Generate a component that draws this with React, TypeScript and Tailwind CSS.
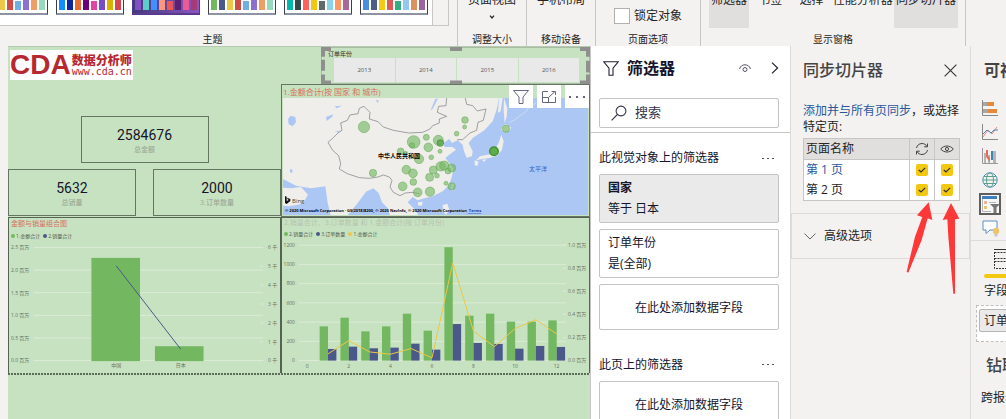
import React from "react";

const themes = [
  {
    dark: false,
    colors: ["#73b761", "#4a588a", "#ecc846", "#cd4c46", "#71afe2", "#8d6fd1", "#ee9e64", "#95dabb"],
  },
  {
    dark: false,
    colors: ["#118dff", "#12239e", "#e66c37", "#6b007b", "#e044a7", "#744ec2", "#d9b300", "#d64550"],
  },
  {
    dark: true,
    colors: ["#8250c4", "#5ecbc8", "#438fff", "#ff977e", "#eb5757", "#5b2071", "#ec5a96", "#a43b76"],
  },
  {
    dark: false,
    colors: ["#73b761", "#4a588a", "#ecc846", "#cd4c46", "#71afe2", "#8d6fd1", "#ee9e64", "#95dabb"],
  },
  {
    dark: false,
    colors: ["#01b8aa", "#374649", "#fd625e", "#f2c80f", "#5f6b6d", "#8ad4eb", "#fe9666", "#a66999"],
  },
  {
    dark: false,
    colors: ["#4a8ddc", "#4c5d8a", "#f3c911", "#dc5b57", "#33ae81", "#95c8f0", "#dd915f", "#9a64a0"],
  },
];

const years = ["2013", "2014", "2015", "2016"];

const months = [
  { month: 1, sales: 356, orders: 121, amount: 0.058 },
  { month: 2, sales: 446, orders: 145, amount: 0.173 },
  { month: 3, sales: 304, orders: 128, amount: 0.075 },
  { month: 4, sales: 356, orders: 135, amount: 0.055 },
  { month: 5, sales: 488, orders: 176, amount: 0.104 },
  { month: 6, sales: 311, orders: 114, amount: 0.023 },
  { month: 7, sales: 1179, orders: 380, amount: 0.844 },
  { month: 8, sales: 467, orders: 183, amount: 0.254 },
  { month: 9, sales: 488, orders: 173, amount: 0.121 },
  { month: 10, sales: 405, orders: 124, amount: 0.277 },
  { month: 11, sales: 405, orders: 152, amount: 0.354 },
  { month: 12, sales: 418, orders: 142, amount: 0.23 },
];

// x, y, radius of every city bubble
const cities = [
  [264, 252, 17], [413, 297, 19], [408, 307, 8], [374, 325, 10], [389, 331, 6],
  [451, 283, 9], [457, 313, 13], [487, 292, 15], [492, 325, 6], [466, 343, 7],
  [429, 348, 14], [567, 231, 10], [566, 252, 6], [542, 272, 7], [690, 257, 11],
  [291, 390, 11], [391, 380, 13], [411, 391, 13], [412, 417, 10], [380, 430, 13],
  [425, 448, 13], [462, 446, 14], [461, 403, 12], [472, 381, 12], [483, 398, 7],
  [494, 370, 14], [505, 368, 14], [516, 384, 9], [527, 375, 12], [510, 421, 6],
  [527, 430, 11],
];

const Divider = () => <div className="w-px bg-[#c8c6c4]" />;

const RibbonGroup = ({
  label,
  className,
  children,
}: {
  label: string;
  className: string;
  children?: React.ReactNode;
}) => (
  <div className={`flex shrink-0 flex-col items-center justify-between ${className}`}>
    <div className="flex w-full justify-center">{children}</div>
    <span className="text-[10px] leading-[14px]">{label}</span>
  </div>
);

const ThemeThumb = ({ colors, dark }: { colors: string[]; dark: boolean }) => (
  <button
    aria-label="theme"
    className={`flex h-[15px] w-[68px] shrink-0 gap-[2px] border-x border-b-2 px-[2px] pb-[3px] ${
      dark
        ? "border-[#4a3b8c] border-b-[#5b3a8e] bg-linear-to-r from-[#3f3a7c] to-[#8d55c0]"
        : "border-[#3b3f4c] border-b-[#8d93a3] bg-white"
    }`}
  >
    {colors.map((color, i) => (
      <span
        key={color}
        className={i === 4 ? "mt-px h-[9px] w-[6px]" : "h-[10px] w-[6px]"}
        style={{ backgroundColor: color }}
      />
    ))}
  </button>
);

const Ribbon = () => (
  <header className="flex h-[46px] shrink-0 overflow-hidden bg-[#f3f2f1] text-[#252423]">
    <div className="flex w-[457px] shrink-0 flex-col justify-between">
      <div className="flex h-[26px] w-[449px] border-r border-b border-[#c8c6c4] bg-white">
        <div className="flex flex-1 justify-end gap-2 overflow-hidden pr-1">
          {themes.map((theme, i) => (
            <ThemeThumb key={i} {...theme} />
          ))}
        </div>
        <div className="w-4 border-l border-[#c8c6c4] bg-[#f3f2f1]" />
      </div>
      <span className="pr-8 text-center text-[10px] leading-[14px]">主题</span>
    </div>
    <Divider />
    <RibbonGroup label="调整大小" className="w-[68px]">
      <button className="flex flex-col items-center text-[12px] leading-3">
        <span className="-mt-[6px]">页面视图</span>
        <svg width="6" height="4" viewBox="0 0 6 4" className="mt-[9px]" fill="none" stroke="#252423" strokeWidth="1.2">
          <path d="M1 .6 3 3 5 .6" />
        </svg>
      </button>
    </RibbonGroup>
    <Divider />
    <RibbonGroup label="移动设备" className="w-[68px]">
      <button className="-mt-[6px] text-[12px] leading-3">手机布局</button>
    </RibbonGroup>
    <Divider />
    <RibbonGroup label="页面选项" className="w-[104px]">
      <label className="mt-2 flex items-center gap-1 text-[12px] leading-4">
        <input type="checkbox" className="size-4 appearance-none border border-[#b3b0ad] bg-white" />
        锁定对象
      </label>
    </RibbonGroup>
    <Divider />
    <RibbonGroup label="显示窗格" className="w-[264px]">
      <div className="flex h-7 w-full justify-between pr-[7px] pl-2 text-[12px] leading-3">
        <button className="flex w-10 justify-center bg-[#e1dfdd]">
          <span className="-mt-[6px]">筛选器</span>
        </button>
        <button className="flex">
          <span className="-mt-[6px]">书签</span>
        </button>
        <button className="ml-2 flex">
          <span className="-mt-[6px]">选择</span>
        </button>
        <button className="flex">
          <span className="-mt-[6px]">性能分析器</span>
        </button>
        <button className="-ml-2 flex w-16 justify-center bg-[#e1dfdd]">
          <span className="-mt-[6px]">同步切片器</span>
        </button>
      </div>
    </RibbonGroup>
    <Divider />
  </header>
);

const Logo = () => (
  <div className="mt-[3px] ml-[2px] flex h-[31px] w-[123px] items-center gap-px bg-white text-[#b8282f]">
    <span className="font-['Liberation_Sans'] text-[28px] leading-7 font-bold">CDA</span>
    <div className="flex flex-col pt-[2px]">
      <span className="text-[12px] leading-3 font-black">数据分析师</span>
      <span className="font-['DejaVu_Sans_Mono'] text-[10px] leading-[10px]">www.cda.cn</span>
    </div>
  </div>
);

const Kpi = ({ value, label }: { value: string; label: string }) => (
  <div className="flex h-[47px] w-32 flex-col items-center justify-center border border-[#667563] pt-1">
    <span className="font-[Roboto] text-[14px] leading-[18px] text-[#14142b]">{value}</span>
    <span className="text-[7px] leading-3 font-medium text-[#9caa97]">{label}</span>
  </div>
);

const Legend = ({ items }: { items: { label: string; dot: string }[] }) => (
  <ul className="flex gap-[3px] text-[5px] leading-2 text-[#4f5a4c]">
    {items.map((item) => (
      <li key={item.label} className="flex items-center gap-px">
        <span className={`size-1 rounded-full ${item.dot}`} />
        {item.label}
      </li>
    ))}
  </ul>
);

const ComboChart = () => (
  <section className="flex-1 border-x border-t border-[#566353] px-[2px]">
    <h3 className="text-[7px] leading-3 text-[#d8705f]">金额与销量组合图</h3>
    <div className="py-[2px]">
      <Legend
        items={[
          { label: "1.金额合计", dot: "bg-[#73b761]" },
          { label: "2.销量合计", dot: "bg-[#4a588a]" },
        ]}
      />
    </div>
    <svg viewBox="0 0 269 132" className="w-full overflow-visible text-[5px]" fill="#66705f">
      {[0, 1, 2, 3, 4, 5].map((i) => (
        <g key={i}>
          <path d={`M23 ${119.5 - i * 22.8}H254`} stroke="#dcebd7" />
          <text x="0" y={121.3 - i * 22.8}>{`${(i / 2).toFixed(1)} 百万`}</text>
        </g>
      ))}
      {[0, 1, 2, 3, 4, 5, 6].map((i) => (
        <g key={i}>
          <path d={`M251 ${119.5 - i * 19}h3`} stroke="#dcebd7" />
          <text x="259" y={121.3 - i * 19}>{`${i} 千`}</text>
        </g>
      ))}
      <rect x="81" y="16" width="49" height="104" fill="#73b761" />
      <rect x="145" y="105" width="49" height="15" fill="#73b761" />
      <path d="M106 24 171 108" stroke="#4a588a" fill="none" />
      <text x="106" y="126" textAnchor="middle">中国</text>
      <text x="171" y="126" textAnchor="middle">日本</text>
    </svg>
  </section>
);

const monthX = (month: number) => 23.3 + month * 20.86;

const MonthChart = () => (
  <section className="flex-1 border-x border-t border-[#566353] px-[2px]">
    <h3 className="text-[7px] leading-[10px] text-[#b5c2b0]">2.销量合计、3.订单数量 和 1.金额合计(按 订单月份)</h3>
    <div className="py-[2px]">
      <Legend
        items={[
          { label: "2.销量合计", dot: "bg-[#73b761]" },
          { label: "3.订单数量", dot: "bg-[#4a588a]" },
          { label: "1.金额合计", dot: "bg-[#ecc846]" },
        ]}
      />
    </div>
    <svg viewBox="0 0 304 133" className="w-full overflow-visible text-[5px]" fill="#66705f">
      {[0, 1, 2, 3, 4, 5, 6].map((i) => (
        <g key={i}>
          <path d={`M15 ${121 - i * 19.3}H283`} stroke="#dcebd7" />
          <text x="11" y={122.8 - i * 19.3} textAnchor="end">{i * 200}</text>
          <text x={23.3 + i * 41.7} y="128.5" textAnchor="middle">{i * 2}</text>
        </g>
      ))}
      {[0, 1, 2, 3, 4, 5].map((i) => (
        <g key={i}>
          <path d={`M280 ${121 - i * 23.2}h3`} stroke="#dcebd7" />
          <text x="285" y={122.8 - i * 23.2}>{`${(i / 5).toFixed(1)} 百万`}</text>
        </g>
      ))}
      {months.map(({ month, sales, orders }) => (
        <g key={month}>
          <rect
            x={monthX(month) - 8.4}
            y={121 - sales * 0.0965}
            width="8.4"
            height={sales * 0.0965}
            fill="#73b761"
          />
          <rect x={monthX(month)} y={121 - orders * 0.0965} width="8.4" height={orders * 0.0965} fill="#4a588a" />
        </g>
      ))}
      <polyline
        points={months.map(({ month, amount }) => `${monthX(month)},${121 - amount * 116}`).join(" ")}
        fill="none"
        stroke="#ecc846"
        strokeWidth="1"
      />
    </svg>
  </section>
);

const Slicer = () => (
  <fieldset aria-label="year" className="relative ml-10 h-[38px] border border-[#a9bca4] pr-[10px] pl-3">
    <div className="-ml-[6px] pt-[2px] text-[6px] leading-2 text-[#333]">订单年份</div>
    <div className="flex gap-px">
      {years.map((year) => (
        <button key={year} className="h-6 flex-1 bg-[#e9e9e9] text-[6px] text-[#555]">
          {year}
        </button>
      ))}
    </div>
    <svg
      className="pointer-events-none absolute -inset-px size-[calc(100%+2px)]"
      viewBox="0 0 269 38"
      preserveAspectRatio="none"
    >
      <g fill="none" stroke="#8f8f8f" strokeWidth="4">
        <path d="M2 10V2H10M129 2H141M259 2H267V10M267 14V26M267 28V36H259M141 36H129M10 36H2V28M2 13V24" />
      </g>
    </svg>
  </fieldset>
);

const MapVisual = () => (
  <section className="relative border border-[#667563] px-px pb-px">
    <h3 className="text-[8px] leading-[13px] text-[#d8705f]">1.金额合计(按 国家 和 城市)</h3>
    <svg viewBox="0 0 305 117" className="w-full bg-[#adc7f4]">
      <g transform="scale(.3333) translate(-21 -165)">
        <path
          d="M0 150H672L662 200 650 235 625 262 590 285 578 300 590 325 588 340 572 344 564 325 560 305 545 292 528 300 520 288 502 300 506 312 530 312 540 320 520 335 508 345 524 365 532 378 528 400 520 425 500 445 470 460 445 466 425 472 410 462 395 478 415 498 430 520H343L335 495 318 478 308 450 292 436 270 446 243 483 212 520H165L155 480 148 430 105 436 60 428 21 408Z"
          fill="#efeeea"
        />
        <path d="M21 434 45 436 75 432 96 455 80 482 40 490 21 488Z" fill="#efeeea" />
        <path d="M672 150H686L680 165 674 205 666 210 668 180Z" fill="#efeeea" />
        <path d="M684 165 694 195 692 222 686 240 683 200Z" fill="#efeeea" />
        <path d="M680 248 690 243 706 254 700 264 684 268 676 260Z" fill="#efeeea" />
        <path d="M676 275 683 295 678 320 664 338 640 345 618 348 600 352 612 340 642 334 658 318 668 300Z" fill="#efeeea" />
        <path d="M596 352 608 356 604 370 596 366Z M618 350 632 349 624 357Z" fill="#efeeea" />
        <path d="M528 420 534 424 530 445 523 436Z M426 478 440 476 438 488 426 487Z M500 486 514 482 520 500 510 516 502 505Z" fill="#efeeea" />
        <path
          d="M36 228 44 218 58 222 60 238 50 250 38 244ZM150 222 172 214 168 222 152 234ZM176 190 198 188 182 196ZM176 266 194 262 186 268ZM42 378 50 380 48 390 42 388ZM298 172 308 172 306 180ZM478 168 486 166 470 198 464 202Z"
          fill="#adc7f4"
        />
        <path
          d="M264 190 250 196 246 212 222 216 214 232 194 240 198 262 186 270 172 284 156 298 170 322 188 338 194 362 190 378 214 392 250 404 280 406 306 402 322 396 340 402 348 412 342 432 352 448 372 458 388 450 410 448 430 452M264 190 282 208 280 228 306 236 322 252 352 262 398 270 440 268 462 258 470 248 490 240 490 228 512 220 484 208 488 190 510 188 512 165M568 165 572 184 590 188 604 204 630 198 622 232 606 238 602 262 582 270 560 290 544 290"
          fill="none"
          stroke="#77777a"
          strokeWidth="2"
        />
        <path d="M700 238 718 230 726 222 750 206 756 196 780 180" fill="none" stroke="#dbe3ee" strokeWidth="2" />
        {cities.map(([cx, cy, r]) => (
          <circle
            key={`${cx}-${cy}`}
            cx={cx}
            cy={cy}
            r={r}
            fill="#73b761"
            fillOpacity=".62"
            stroke="#5da34c"
            strokeOpacity=".7"
            strokeWidth="2"
          />
        ))}
        <circle cx="493" cy="300" r="10" fill="#5aa348" fillOpacity=".8" stroke="#3f8f30" strokeWidth="2" />
        <circle cx="654" cy="325" r="13" fill="#5fac4d" stroke="#3f9030" strokeWidth="4" />
        <path d="M27 459 32 461V474L38 471 35 469 33 464 43 468V474L32 483 27 480Z" fill="#111" />
      </g>
      <text x="95" y="60" className="text-[6px] font-bold">中华人民共和国</text>
      <text x="246" y="73" className="text-[6px]" fill="#2f5fc0">太平洋</text>
      <text x="9" y="105" className="text-[6px]" fill="#444">Bing</text>
      <text x="2" y="114" className="text-[4px] font-bold">
        © 2020 Microsoft Corporation · GS(2018)8200, © 2020 NavInfo, © 2020 Microsoft Corporation
        <tspan dx="1" textDecoration="underline" fill="#1a3f9a"> Terms</tspan>
      </text>
    </svg>
    <div className="absolute top-0 right-0 flex gap-1">
      <button aria-label="filter" className="grid h-[23px] w-6 place-items-center bg-white">
        <svg width="18" height="16" viewBox="0 0 18 16" fill="none" stroke="#666680">
          <path d="M1.5 1.5H16.5L11 8V14.5H7V8Z" />
        </svg>
      </button>
      <button aria-label="focus" className="grid h-[23px] w-6 place-items-center bg-white">
        <svg width="16" height="14" viewBox="0 0 16 14" fill="none" stroke="#666680">
          <path d="M7 1.5H1.5V12.5H14.5V7M1.5 7.5H7.5V12.5M7.5 7.5 14 1.5M10.5 1.5H14.5V5" />
        </svg>
      </button>
      <button aria-label="more" className="grid h-[23px] w-6 place-items-center bg-white">
        <svg width="16" height="2" viewBox="0 0 16 2" fill="#66667a">
          <path d="M0 0h2v2H0ZM7 0h2v2H7ZM14 0h2v2h-2Z" />
        </svg>
      </button>
    </div>
  </section>
);

const Report = () => (
  <main className="flex min-w-0 flex-1 flex-col bg-[#f3f2f1] pl-2">
    <div className="flex flex-1 flex-col border-t border-[#b5cbaf] bg-[#c7e2c1]">
      <div className="flex h-[326px]">
        <div className="flex w-[273px] shrink-0 flex-col">
          <Logo />
          <div className="mt-9 flex justify-center">
            <Kpi value="2584676" label="总金额" />
          </div>
          <div className="mt-[6px] mb-px flex justify-between">
            <Kpi value="5632" label="总销量" />
            <Kpi value="2000" label="3.订单数量" />
          </div>
          <ComboChart />
        </div>
        <div className="flex min-w-0 flex-1 flex-col">
          <Slicer />
          <MapVisual />
          <MonthChart />
        </div>
      </div>
      <div className="h-[2px] bg-[repeating-linear-gradient(90deg,#5d6b5a_0_2px,transparent_2px_3px)]" />
    </div>
  </main>
);

const MoreButton = () => (
  <button aria-label="more" className="mr-[5px] flex gap-[3px]">
    <span className="h-px w-[2px] bg-[#55555f]" />
    <span className="h-px w-[2px] bg-[#55555f]" />
    <span className="h-px w-[2px] bg-[#55555f]" />
  </button>
);

const AddField = () => (
  <button className="mt-[6px] h-[46px] w-full rounded-xs border border-[#c4c4c4] pt-[2px]">在此处添加数据字段</button>
);

const FilterPane = () => (
  <aside className="w-[200px] shrink-0 border-l border-[#c8c6c4] bg-white text-[12px] text-[#14142b]">
    <div className="border-b border-[#c8c6c4] pr-[11px] pb-1 pl-2">
      <div className="flex h-[52px] items-center pb-2 pl-1">
        <svg width="16" height="15" viewBox="0 0 16 15" fill="none" stroke="#222236" strokeWidth="1.1">
          <path d="M.8.8H15.2L10 7.2V14.2H6V7.2Z" />
        </svg>
        <h2 className="ml-2 flex-1 text-[16px] leading-6 font-bold">筛选器</h2>
        <button aria-label="hide">
          <svg width="12" height="9" viewBox="0 0 12 9" fill="none" stroke="#55556a">
            <path d="M.5 5C1.5 2 3.5.8 6 .8S10.500 2 11.500 5" />
            <circle cx="6" cy="5.500" r="2" />
          </svg>
        </button>
        <button aria-label="collapse" className="ml-5">
          <svg width="8" height="12" viewBox="0 0 8 12" fill="none" stroke="#222236" strokeWidth="1.200">
            <path d="M1 .6 6.600 6 1 11.400" />
          </svg>
        </button>
      </div>
      <label className="flex h-[30px] items-center gap-2 rounded-xs border border-[#c4c4c4] pl-[11px]">
        <svg width="16" height="16" viewBox="0 0 16 16" fill="none" stroke="#33334a" strokeWidth="1.100">
          <circle cx="10" cy="6" r="4.900" />
          <path d="M6.400 9.500.6 15.300" />
        </svg>
        <input
          type="text"
          aria-label="搜索"
          placeholder="搜索"
          className="w-24 text-[13px] outline-none placeholder:text-[#33334a]"
        />
      </label>
    </div>
    <div className="pr-[11px] pl-2">
      <div className="flex h-[41px] items-center justify-between pt-[9px]">
        <h3>此视觉对象上的筛选器</h3>
        <MoreButton />
      </div>
      <div className="h-[49px] rounded-xs border border-[#c4c4c4] bg-[#eaeaea] px-2 pt-[2px] leading-[21px]">
        <p className="font-bold">国家</p>
        <p>等于 日本</p>
      </div>
      <div className="mt-[6px] h-[49px] rounded-xs border border-[#c4c4c4] px-2 pt-[2px] leading-[21px]">
        <p>订单年份</p>
        <p>是(全部)</p>
      </div>
      <AddField />
      <div className="flex h-[45px] items-center justify-between pt-[24px]">
        <h3>此页上的筛选器</h3>
        <MoreButton />
      </div>
      <AddField />
    </div>
  </aside>
);

const SyncCheck = ({ label }: { label: string }) => (
  <span className="grid place-items-center">
    <input
      type="checkbox"
      defaultChecked
      aria-label={label}
      className="col-start-1 row-start-1 size-3 appearance-none rounded-[2px] bg-[#f2c811]"
    />
    <svg
      width="8"
      height="6"
      viewBox="0 0 8 6"
      fill="none"
      stroke="#333"
      strokeWidth="1.200"
      className="pointer-events-none col-start-1 row-start-1"
    >
      <path d="M.8 3 3 5 7.200.8" />
    </svg>
  </span>
);

const SyncPane = () => (
  <aside className="relative w-[181px] shrink-0 border-x border-[#dddbd9] bg-[#f3f2f1] text-[12px] text-[#252423]">
    <div className="flex h-[56px] items-center justify-between pr-[13px] pb-2 pl-3">
      <h2 className="text-[16px] font-medium text-[#444]">同步切片器</h2>
      <button aria-label="close">
        <svg width="13" height="13" viewBox="0 0 13 13" fill="none" stroke="#333" strokeWidth="1.100">
          <path d="M.6.6 12.400 12.400M12.400.6.6 12.400" />
        </svg>
      </button>
    </div>
    <div className="pr-[10px] pl-3">
      <p className="pt-px leading-4 whitespace-nowrap">
        <a href="#" className="text-[#2b579a]">
          添加并与所有页同步
        </a>
        ，或选择
        <br />
        特定页:
      </p>
      <table className="mt-[3px] w-[157px] border-collapse border border-[#c8c6c4]">
        <thead>
          <tr className="h-[21px] border border-[#c8c6c4] bg-[#e1dfdd]">
            <th className="p-0 pl-[2px] text-left leading-[18px] font-normal">页面名称</th>
            <th className="w-[25px] border-x border-[#c8c6c4] p-0">
              <svg width="14" height="14" viewBox="0 0 14 14" fill="none" stroke="#444" className="mx-auto">
                <path d="M1.500 6C2 3.500 4 1.500 7 1.500 9 1.500 11 2.500 12 4.500M12.500 1.500V4.800H9.200M12.500 8C12 10.500 10 12.500 7 12.500 5 12.500 3 11.500 2 9.500M1.500 12.500V9.200H4.800" />
              </svg>
            </th>
            <th className="w-[25px] p-0">
              <svg width="14" height="8" viewBox="0 0 14 8" fill="none" stroke="#444" className="mx-auto">
                <path d="M.7 4C4 0 10 0 13.300 4 10 8 4 8 .7 4Z" />
                <circle cx="7" cy="4" r="1.600" />
              </svg>
            </th>
          </tr>
        </thead>
        <tbody className="bg-white">
          <tr className="h-5">
            <td className="p-0 pl-[2px] leading-5 text-[#2b579a]">第 1 页</td>
            <td className="border-x border-[#c8c6c4] p-0">
              <SyncCheck label="同步 第 1 页" />
            </td>
            <td className="p-0">
              <SyncCheck label="可见 第 1 页" />
            </td>
          </tr>
          <tr className="h-5">
            <td className="p-0 pl-[2px] leading-5">第 2 页</td>
            <td className="border-x border-[#c8c6c4] p-0">
              <SyncCheck label="同步 第 2 页" />
            </td>
            <td className="p-0">
              <SyncCheck label="可见 第 2 页" />
            </td>
          </tr>
        </tbody>
      </table>
    </div>
    <button className="mt-3 flex h-[46px] w-full items-center gap-2 border border-[#dddbd9] pl-3">
      <svg width="12" height="7" viewBox="0 0 12 7" fill="none" stroke="#666">
        <path d="M.5.6 6 6 11.500.6" />
      </svg>
      高级选项
    </button>
    <svg
      width="55"
      height="95"
      viewBox="345 30 165 285"
      fill="#fc3838"
      className="pointer-events-none absolute top-[154px] left-[114px]"
    >
      <path d="M416 37 381 76 397 81 375 140 350 245 355 248 395 150 413 85 427 90Z" />
      <path d="M483 39 458 90 472 88 475 140 490 311H495L495 88 508 86Z" />
    </svg>
  </aside>
);

const VisualizationPane = () => (
  <aside className="w-[35px] shrink-0 overflow-hidden bg-[#f3f2f1] text-[12px] whitespace-nowrap text-[#252423]">
    <h2 className="h-[50px] pt-3 pl-[13px] text-[16px] leading-6 font-bold text-[#444]">可视化</h2>
    <div className="flex flex-col items-start gap-2 border-b border-[#dddbd9] pt-1 pb-[3px] pl-[11px]">
      <button aria-label="stacked bar">
        <svg width="16" height="16" viewBox="0 0 16 16">
          <path d="M1 2H5V6H1ZM1 9H6V13H1Z" fill="#a6a6a6" />
          <path d="M5 2H12V6H5ZM6 9H15V13H6Z" fill="#e8883a" />
          <path d="M.5 0V15.500H16" fill="none" stroke="#888" />
        </svg>
      </button>
      <button aria-label="line">
        <svg width="16" height="16" viewBox="0 0 16 16" fill="none">
          <path d="M1 13 6 6 10 10 15 3" stroke="#e58a7c" />
          <path d="M1 10 5 6 9 9 12 6H16" stroke="#4e86b8" />
          <path d="M.5 0V15.500H16" stroke="#888" />
        </svg>
      </button>
      <button aria-label="ribbon">
        <svg width="16" height="16" viewBox="0 0 16 16">
          <path d="M2 5H4V15H2ZM6 7H8V15H6ZM11 3H14V15H11Z" fill="#b5b5b5" />
          <path d="M4 2H6V8L8 10V14L4 9Z" fill="#e0705c" />
          <path d="M9 3H11V12H9Z" fill="#3f86b0" />
          <path d="M.5 0V15.500H16" fill="none" stroke="#999" />
        </svg>
      </button>
      <button aria-label="map">
        <svg width="16" height="16" viewBox="0 0 16 16" fill="none" stroke="#4b8db5">
          <circle cx="8" cy="8" r="7.200" />
          <ellipse cx="8" cy="8" rx="3.500" ry="7.200" stroke="#5aa08a" />
          <path d="M1 8H15M2 4.500H14M2 11.500H14" stroke="#5aa08a" />
        </svg>
      </button>
      <button aria-label="slicer" className="-my-[3px] -ml-[3px]">
        <svg width="22" height="22" viewBox="0 0 22 22">
          <rect x="1" y="1" width="20" height="20" fill="#f7f7f7" stroke="#605e5c" strokeWidth="2" />
          <path d="M3 3H18V6H3Z" fill="#3f7fc0" />
          <path d="M3.500 6V18.500H12" fill="none" stroke="#b5b5b5" />
          <path d="M5 8H8V11H5Z" fill="#e9b49a" />
          <path d="M5 13H8V16H5Z" fill="#ecc27a" />
          <path d="M10 9.500H17" stroke="#b5b5b5" />
          <path d="M11 11H21L17.500 14.500V20H14.500V14.500Z" fill="#777" />
        </svg>
      </button>
      <button aria-label="q and a">
        <svg width="18" height="17" viewBox="0 0 18 17">
          <path d="M1 1H15V10H8L4 13.500V10H1Z" fill="#fff" stroke="#5f8fc4" />
          <circle cx="14" cy="11" r="3.200" fill="#ecc46a" />
          <path d="M12.500 14H15.500V16.500H12.500Z" fill="#c8c6c4" />
        </svg>
      </button>
    </div>
    <div className="pt-2 pl-[13px]">
      <svg width="22" height="20" viewBox="0 0 22 20" fill="none" stroke="#333" className="ml-[10px]">
        <path d="M0 .5H22" />
        <path d="M.5 3V19.500H22M.5 3.500H22M.5 9.500H22M.5 12.500H22" strokeDasharray="2 1" />
      </svg>
      <div className="mt-[5px] h-1 rounded-l-full bg-[#f2c811]" />
      <div className="pt-1 leading-[18px]">字段</div>
    </div>
    <div className="mt-[5px] ml-[5px] w-24 border border-dashed border-[#c0bebc] bg-white p-[3px] pb-[9px] pl-[2px]">
      <button className="flex h-[23px] w-full items-center rounded-xs border border-[#b8b6b4] bg-[#eaeaea] pl-1">
        订单年份
      </button>
    </div>
    <h3 className="pt-[11px] pl-[15px] text-[16px] leading-6 font-medium text-[#444]">钻取</h3>
    <p className="pt-3 pl-[10px] leading-[18px]">跨报表</p>
  </aside>
);

export default function App() {
  return (
    <div className="flex h-screen flex-col overflow-hidden bg-[#f3f2f1] font-['Open_Sans','Noto_Sans_CJK_SC',sans-serif]">
      <Ribbon />
      <div className="flex min-h-0 flex-1">
        <Report />
        <FilterPane />
        <SyncPane />
        <VisualizationPane />
      </div>
    </div>
  );
}
